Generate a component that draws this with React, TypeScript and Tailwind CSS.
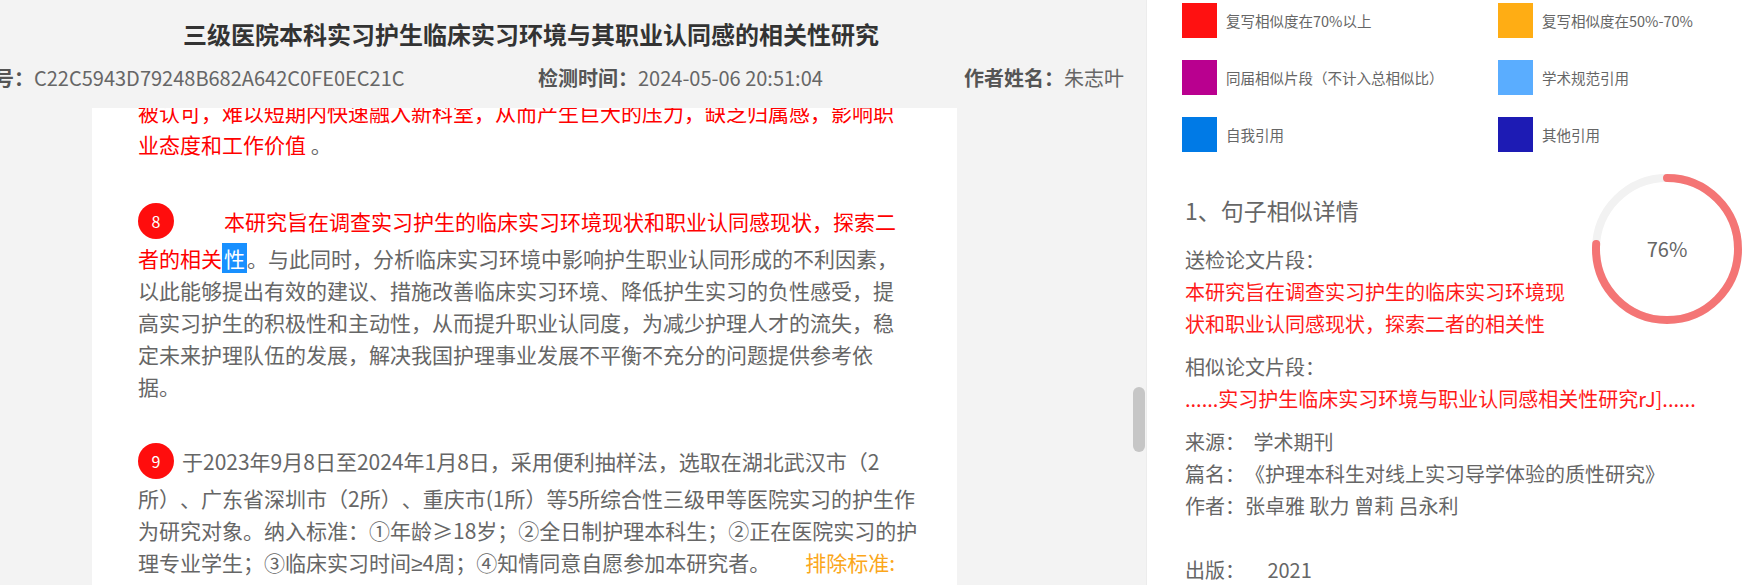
import React from 'react';

const legend = [
  { color: 'bg-[#ff1111]', label: '复写相似度在70%以上' },
  { color: 'bg-[#ffad14]', label: '复写相似度在50%-70%' },
  { color: 'bg-[#b9008f]', label: '同届相似片段（不计入总相似比）' },
  { color: 'bg-[#5aadff]', label: '学术规范引用' },
  { color: 'bg-[#007ae6]', label: '自我引用' },
  { color: 'bg-[#1d1bb4]', label: '其他引用' },
];

const Badge: React.FC<{ n: number }> = ({ n }) => (
  <span className="inline-flex h-[36px] w-[36px] shrink-0 items-center justify-center rounded-full bg-[#ff0d0d] text-[16px] leading-none text-white">
    {n}
  </span>
);

// half-width "≥" like the original page font
const Ge = () => <span className="font-['Liberation_Sans',sans-serif]">≥</span>;

const Ring: React.FC<{ value: number }> = ({ value }) => {
  const r = 71;
  const c = 2 * Math.PI * r;
  return (
    <div className="relative h-[150px] w-[150px] shrink-0">
      <svg width="150" height="150" viewBox="0 0 150 150" className="-rotate-90">
        <circle cx="75" cy="75" r={r} fill="none" stroke="#f2f2f2" strokeWidth="8" />
        <circle
          cx="75"
          cy="75"
          r={r}
          fill="none"
          stroke="#f47575"
          strokeWidth="8"
          strokeLinecap="round"
          strokeDasharray={`${(c * value) / 100} ${c}`}
        />
      </svg>
      <div className="absolute inset-0 flex items-center justify-center text-[20px] text-[#666]">{value}%</div>
    </div>
  );
};

export default function App() {
  return (
    <div className="flex h-[585px] w-[1758px] overflow-hidden font-['Noto_Sans_CJK_SC','Noto_Sans',sans-serif] [text-spacing-trim:space-all]">
      {/* left: paper text */}
      <div className="relative flex w-[1146px] shrink-0 flex-col overflow-hidden bg-[#f3f3f3]">
        <header className="h-[108px] shrink-0">
          <h1 className="w-[1062px] pt-[14px] text-center text-[24px] font-bold leading-[40px] text-[#333]">
            三级医院本科实习护生临床实习环境与其职业认同感的相关性研究
          </h1>
          <div className="ml-[-66px] mt-[4px] flex h-[40px] items-center whitespace-nowrap text-[20px] text-[#666]">
            <div className="w-[604px] shrink-0">
              <span className="font-bold text-[#555]">报告编号：</span>C22C5943D79248B682A642C0FE0EC21C
            </div>
            <div className="w-[426px] shrink-0">
              <span className="font-bold text-[#555]">检测时间：</span>2024-05-06 20:51:04
            </div>
            <div className="shrink-0">
              <span className="font-bold text-[#555]">作者姓名：</span>朱志叶
            </div>
          </div>
        </header>

        <div className="flex min-h-0 flex-1">
          <div className="ml-[92px] w-[865px] overflow-hidden bg-white pl-[46px]">
            <div className="mt-[-12px] whitespace-nowrap text-[21px] leading-[32px] text-[#666]">
              <p className="text-[#ff0000]">
                被认可，难以短期内快速融入新科室，从而产生巨大的压力，缺乏归属感，影响职
                <br />
                业态度和工作价值<span className="text-[#666]"> 。</span>
              </p>

              <div className="mt-[40px]">
                <div className="flex h-[42px] items-center">
                  <Badge n={8} />
                  <span className="ml-[8px] text-[#ff0000]">　　本研究旨在调查实习护生的临床实习环境现状和职业认同感现状，探索二</span>
                </div>
                <p>
                  <span className="text-[#ff0000]">者的相关</span>
                  <span className="bg-[#1890ff] px-[2px] text-white">性</span>
                  。与此同时，分析临床实习环境中影响护生职业认同形成的不利因素，
                  <br />
                  以此能够提出有效的建议、措施改善临床实习环境、降低护生实习的负性感受，提
                  <br />
                  高实习护生的积极性和主动性，从而提升职业认同度，为减少护理人才的流失，稳
                  <br />
                  定未来护理队伍的发展，解决我国护理事业发展不平衡不充分的问题提供参考依
                  <br />
                  据。
                </p>
              </div>

              <div className="mt-[38px]">
                <div className="flex h-[42px] items-center">
                  <Badge n={9} />
                  <span className="ml-[8px]">于2023年9月8日至2024年1月8日，采用便利抽样法，选取在湖北武汉市（2</span>
                </div>
                <p>
                  所）、广东省深圳市（2所）、重庆市(1所）等5所综合性三级甲等医院实习的护生作
                  <br />
                  为研究对象。纳入标准：①年龄≥18岁；②全日制护理本科生；②正在医院实习的护
                  <br />
                  理专业学生；③临床实习时间<Ge />4周；④知情同意自愿参加本研究者。
                  <span className="ml-[35px] text-[#fba71b]">排除标准:</span>
                  <br />
                  <span className="text-[#fba71b]">①实习期间请假超过1周者；②中途退出研究者；③未完成问卷调查者。</span>
                </p>
              </div>
            </div>
          </div>
        </div>

        <div className="absolute left-[1133px] top-[387px] h-[65px] w-[12px] rounded-full bg-[#c6c6c6]" />
      </div>

      {/* right: legend + similarity detail */}
      <div className="flex w-[612px] shrink-0 flex-col border-l border-[#ececec] bg-white">
        <div className="grid grid-cols-[316px_1fr] gap-y-[22px] pl-[35px] pt-[3px]">
          {legend.map((item) => (
            <div key={item.label} className="flex items-center gap-[9px]">
              <span className={`h-[35px] w-[35px] shrink-0 ${item.color}`} />
              <span className="text-[14.5px] text-[#666]">{item.label}</span>
            </div>
          ))}
        </div>

        <div className="pl-[38px] text-[20px] leading-[32px] text-[#666]">
          <div className="mt-[22px] flex justify-between pr-[16px]">
            <div className="pt-[20px]">
              <div className="text-[23px]">1、句子相似详情</div>
              <div className="mt-[18px]">送检论文片段：</div>
              <div className="text-[#ff1a1a]">
                本研究旨在调查实习护生的临床实习环境现
                <br />
                状和职业认同感现状，探索二者的相关性
              </div>
            </div>
            <Ring value={76} />
          </div>

          <div className="mt-[11px]">相似论文片段：</div>
          <div className="whitespace-nowrap text-[#ff1a1a]">......实习护生临床实习环境与职业认同感相关性研究rJ]......</div>

          <div className="mt-[11px]">
            来源：&nbsp;<span className="ml-[4px]">学术期刊</span>
          </div>
          <div>篇名：《护理本科生对线上实习导学体验的质性研究》</div>
          <div>作者：张卓雅 耿力 曾莉 吕永利</div>
          <div className="mt-[32px]">出版：&nbsp;&nbsp;&nbsp;&nbsp;&nbsp;2021</div>
        </div>
      </div>
    </div>
  );
}
